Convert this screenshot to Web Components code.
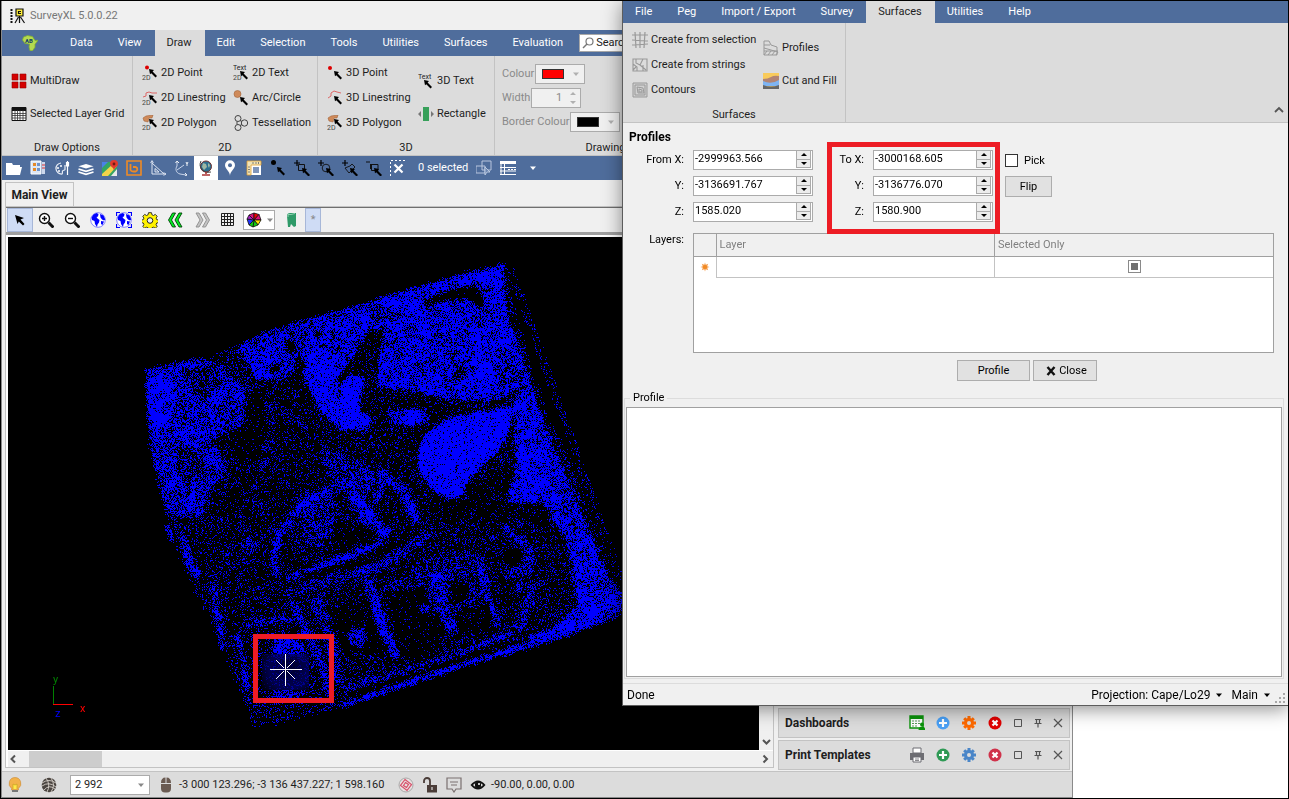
<!DOCTYPE html>
<html lang="en">
<head>
<meta charset="utf-8">
<title>SurveyXL 5.0.0.22</title>
<style>
  html, body { margin: 0; height: 100%; }
  body { font: 11px/14px Roboto, "Liberation Sans", sans-serif; color: #1e1e1e; }
</style>
</head>
<body>
<survey-desktop></survey-desktop>

<script>
/* ---------- icon set ---------- */
const arrow = (x, y) => `<path transform="translate(${x} ${y})" d="M0 0l5 1-1.4 1.5L8 7 6.500 8.500 2.300 4.200 1 5.300z" fill="#000"/>`;
const tag2d = `<text x="0" y="15" font-size="7" fill="#444">2D</text>`;
const cog = c => `<g stroke="${c}" stroke-width="3"><path d="M8 1v14M1 8h14M3.200 3.200l9.600 9.600M12.800 3.200l-9.600 9.600"/></g><circle cx="8" cy="8" r="5" fill="${c}"/><circle cx="8" cy="8" r="2" fill="#dcdcdc"/>`;
const disc = (c, d) => `<circle cx="8" cy="8" r="6.500" fill="${c}"/><path d="${d}" stroke="#fff" stroke-width="2.200"/>`;
const globe = `<circle cx="8" cy="8" r="7.300" fill="#fff" stroke="#66f" stroke-width=".8"/><path d="M1.500 5.500l2-3L6.500 1l2 1-.5 2.500-1.500.5 1 1.500 2 1.500-.5 2.500-1.500 2-.5 2.500L5 12l-.5-3-2.500-1zM10 2l3.500 1.500 1.800 4-1.300 1-2-1-1.500-2zM11 9l3 .5-1.500 3.500-1.500-1z" fill="#00f"/>`;
const axesCrop = extra => `<path d="M0 3h6M3 0v6" stroke="#000" stroke-width="1.200"/>${extra}${arrow(8, 8)}`;
const ICONS = {
  app: `<path d="M1.500 1v14" stroke="#111" stroke-width="2" stroke-dasharray="2 1"/><path d="M6 1h7v7H6z" fill="#ffef3a" stroke="#111" stroke-width="1.200"/><path d="M11 3.500H8.500v2h2.500M9.500 8v7M8.500 9L5 15M10.500 9l4 6" fill="none" stroke="#111" stroke-width="1.200"/>`,
  africa: `<path d="M1.500 2l4-1.500 5 1 2.500 4 3-.2-3 4v3l-2.500 3.500H8L7 12l.5-3L3 8.500.5 5z" fill="#b4da50" stroke="#7fae30" stroke-width=".8"/><text x="3" y="8" font-size="6" font-weight="700" fill="#123a6a">AB</text>`,
  multi: `<path d="M1 1h6v6H1zM9 1h6v6H9zM1 9h6v6H1zM9 9h6v6H9z" fill="#d40000" stroke="#900" stroke-width=".6"/>`,
  grid: `<path d="M1 1.500h14v13H1z" fill="#fff" stroke="#111"/><path d="M1 1h14v4H1z" fill="#111"/><path d="M1 7.500h14M1 9.500h14M1 12h14M4 4v10M6.500 4v10M9 4v10M12 4v10" stroke="#333" stroke-width=".8"/>`,
  point2: `<circle cx="5" cy="2.500" r="2" fill="#d00"/>${tag2d}${arrow(7, 4)}`,
  text2: `<text x="0" y="5" font-size="7" fill="#222">Text</text>${tag2d}${arrow(7, 6)}`,
  line2: `<path d="M1 7l3-1V3l3-1 3 1 5 0" fill="none" stroke="#d66" stroke-width="1"/>${tag2d}${arrow(7, 5)}`,
  poly2: `<path d="M1 3l3-2 7-1-1 3H7L6 7 2 6z" fill="#cf8a5a" stroke="#a3643a" stroke-width=".6"/>${tag2d}${arrow(7, 4)}`,
  arc: `<circle cx="4.500" cy="4" r="3.500" fill="#cf8a5a" stroke="#a3643a" stroke-width=".6"/>${arrow(7, 7)}`,
  tess: `<g fill="none" stroke="#444"><circle cx="5" cy="3.500" r="3"/><circle cx="11.500" cy="8" r="3.200"/><circle cx="5" cy="12.500" r="3"/><path d="M4 6.500v3M7 5.500l2 1M7 10.500l2-1"/></g>`,
  point3: `<circle cx="3" cy="3" r="2" fill="#d00"/>${arrow(7, 6)}`,
  line3: `<path d="M1 8l3-2V3l3-2 3 1 4 1" fill="none" stroke="#d66" stroke-width="1"/>${arrow(7, 6)}`,
  text3: `<text x="0" y="6" font-size="7" fill="#222">Text</text>${arrow(6, 7)}`,
  rect: `<path d="M5 1h6v14H5z" fill="#37a05a"/><path d="M3 5v6L0 8zM13 5v6l3-3z" fill="#777"/>`,
  search: `<circle cx="9.500" cy="6.500" r="3.500" fill="none" stroke="#777" stroke-width="1.200"/><path d="M7 9l-4 4" stroke="#777" stroke-width="1.400"/>`,
  folder: `<path d="M0 3h6l1 2h7v2h2l-2 8H0z" fill="#fff"/>`,
  props: `<path d="M1 1h10v13H1z" fill="#dce6f5" stroke="#fff"/><path d="M3 3h3v3H3zM3 8h3v3H3z" fill="#e58a2a"/><path d="M7 3h3v3H7zM7 8h3v3H7z" fill="#6f94cc"/><path d="M12 2h3v12h-3z" fill="#ccd8ec"/><path d="M12 5h3M12 8h3" stroke="#d33"/>`,
  palette: `<path d="M7 3a5.500 5.500 0 1 0 1 11c1-1 0-2 .5-3s2-.5 2.500-1.500L11 5" fill="none" stroke="#e9eef6" stroke-width="1.200"/><circle cx="4" cy="8" r="1" fill="#fff"/><circle cx="7" cy="6" r="1" fill="#fff"/><circle cx="5" cy="11" r="1" fill="#fff"/><path d="M13.500 1v14M12.500 2v4h2V2" stroke="#fff" stroke-width="1.200" fill="none"/>`,
  layers: `<path d="M8 4l7.500 2.200L8 8.500.5 6.200z" fill="#fff"/><path d="M.5 9L8 11.300 15.500 9M.5 12L8 14.300l7.500-2.300" fill="none" stroke="#fff" stroke-width="1.600"/>`,
  map: `<path d="M0 2h15v14H0z" fill="#35a563"/><path d="M0 14L12 3l3 3-9 10H0z" fill="#f3d34a"/><path d="M9 16l6-7v7z" fill="#e8e8e8"/><path d="M0 2h6L0 8z" fill="#4a80e8"/><path d="M12 11c0-4-4-4-4-7a4 4 0 0 1 8 0c0 3-4 3-4 7z" fill="#e23a2e"/><circle cx="12" cy="4" r="1.400" fill="#701a14"/>`,
  bing: `<path d="M1 1h14v14H1z" fill="none" stroke="#f08a24" stroke-width="1.600"/><path d="M4.500 4v6a3 2 0 0 0 3 1.500h2a2.300 2.300 0 0 0 0-4.500H7" fill="none" stroke="#f08a24" stroke-width="1.800"/>`,
  angle: `<path d="M2 1v13h14M2 3l12 11" fill="none" stroke="#dfe6f2"/><path d="M5 8.500V12h4z" fill="none" stroke="#dfe6f2"/><path d="M.5 3L2 .5 3.500 3M13.500 12.500L16 14l-2.500 1.500" fill="none" stroke="#dfe6f2" stroke-width=".8"/>`,
  axes: `<path d="M3 2v4c-2 3-1 7 3 8l6 1M3 10l7-5" fill="none" stroke="#c9d5ea"/><path d="M1.500 3L3 1l2 2M12 2l1 2 1-2M13 4v2M11 13l2 2-2 1" fill="none" stroke="#fff" stroke-width=".9"/>`,
  globe3: `<circle cx="8" cy="6.500" r="5.500" fill="#2c6f8f" stroke="#703030"/><path d="M5 3l3 1 1 3-3 3-2-3zM10 3l2 2-1 3-1-2z" fill="#9db7a3"/><path d="M3 1a8 8 0 0 0 10 11" fill="none" stroke="#444"/><path d="M8 12v2M4 15h8" stroke="#a33" stroke-width="1.600"/>`,
  pin: `<path d="M8 16C8 11 3 9 3 5.200a5 5 0 0 1 10 0C13 9 8 11 8 16z" fill="#fff"/><circle cx="8" cy="5.300" r="2" fill="#4f6d9c"/>`,
  ruler: `<path d="M5 5h10v10H5z" fill="#fff"/><path d="M7 7h6v6H7z" fill="#7f95bb"/><path d="M1 1h14v4H5v10H1z" fill="#f2e4b8" stroke="#e0a030" stroke-width=".8"/><path d="M2 7h2M2 9.500h2M2 12h2M7 2v2M10 2v2M12.500 2v2" stroke="#555" stroke-width=".7"/>`,
  pick: `<circle cx="3.500" cy="2.500" r="2.500"/>${arrow(7, 7)}`,
  cropR: axesCrop(`<path d="M4.500 4.500h6v6h-6z" fill="none" stroke="#111"/>`),
  cropC: axesCrop(`<circle cx="8" cy="8" r="3.800" fill="none" stroke="#111" stroke-width=".9"/>`),
  cropP: axesCrop(`<path d="M3 8l5-2 2-2 3 3-3 3-3 3z" fill="none" stroke="#111" stroke-width=".9"/>`),
  cropL: `<path d="M0 2h4M4.500 4v5M4 4.500h8v6H5.500v-6" fill="none" stroke="#111"/>${arrow(8, 8)}`,
  clear: `<path d="M.5 16V.5H16" fill="none" stroke="#fff" stroke-dasharray="2 2"/><path d="M4.500 4.500l8 8M12.500 4.500l-8 8" stroke="#fff" stroke-width="2.200"/>`,
  shapes: `<path d="M0 6h9v7H0zM6 1h9v9H6z" fill="none" stroke="#b9c6de"/><path d="M9 7l5 5h-3l-2 3z" fill="#6f88b2" stroke="#c9d5ea" stroke-width=".8"/>`,
  table: `<path d="M0 1h16v3H0z" fill="#fff"/><path d="M1 4v11M4.500 4v11M0 7.500h16M0 11h16M0 14.500h16" stroke="#fff"/><path d="M8 9.500h8" stroke="#fff" stroke-dasharray="2 1"/>`,
  caret: `<path d="M5 6.500h6L8 10z" fill="currentColor"/>`,
  cursor: `<path d="M3 3l9 3-3.500 1.500L12.500 12 11 13.500 6.800 9.500 5.500 12z" fill="#000"/>`,
  zoomIn: `<circle cx="6.500" cy="6.500" r="5" fill="#fff" stroke="#111" stroke-width="1.400"/><path d="M4 6.500h5M6.500 4v5" stroke="#111" stroke-width="1.400"/><path d="M10.500 10.500l5 5" stroke="#111" stroke-width="3"/>`,
  zoomOut: `<circle cx="6.500" cy="6.500" r="5" fill="#fff" stroke="#111" stroke-width="1.400"/><path d="M4 6.500h5" stroke="#111" stroke-width="1.400"/><path d="M10.500 10.500l5 5" stroke="#111" stroke-width="3"/>`,
  globe,
  globeFit: `${globe}<path d="M.5 4V.5H4M12 .5h3.500V4M.5 12v3.500H4M12 15.500h3.500V12" fill="none" stroke="#00f" stroke-width="1.200"/>`,
  gear: `<path d="M6.500.7h3l.4 2 1.600.8 1.800-1.100 1.900 1.900-1.100 1.800.6 1.500 2 .5v2.500l-2 .4-.6 1.600 1.100 1.800-1.900 1.900-1.800-1.100-1.600.6-.4 2h-3l-.4-2-1.600-.6-1.800 1.100-1.900-1.900 1.100-1.800-.6-1.600-2-.4V8.100l2-.5.6-1.500L.8 4.300l1.900-1.900 1.800 1.100 1.600-.8z" fill="#fff200" stroke="#222" stroke-width=".9"/><circle cx="8" cy="8.500" r="2.800" fill="#f0f0f0" stroke="#222"/>`,
  back: `<path d="M7.500 1h-3L.5 8l4 7h3l-4-7zM14 1h-3L7 8l4 7h3l-4-7z" fill="#0e2" stroke="#033c08" stroke-width=".9"/>`,
  fwd: `<path d="M2 1h3l4 7-4 7H2l4-7zM8.500 1h3l4 7-4 7h-3l4-7z" fill="#c4c4c4" stroke="#8c8c8c" stroke-width=".9"/>`,
  mesh: `<path d="M1.500 1.500h12v12h-12zM4.500 2v12M7.500 2v12M10.500 2v12M2 4.500h12M2 7.500h12M2 10.500h12" fill="none" stroke="#222"/>`,
  wheel: `<g stroke="#111" stroke-width=".8"><path d="M8 8L3 3l5-2z" fill="#e0107a"/><path d="M8 8V1l5 1.500z" fill="#e00"/><path d="M8 8l5-5.500L15 8z" fill="#e0107a"/><path d="M8 8l7 0-3 5z" fill="#ffe000"/><path d="M8 8l4 5-5 2z" fill="#1c1"/><path d="M8 8l-1 7-4-2z" fill="#1c1"/><path d="M8 8l-5 5-2-6z" fill="#23f"/><path d="M8 8L1 7l2-4z" fill="#a020c0"/></g>`,
  bookmark: `<path d="M3 4q0-3 3-3h6v13l-2 1-3-3-1 3-2 0z" fill="#2e9a68"/><path d="M4 5V2.500h3l4-1" stroke="#8fd0b0" fill="none"/>`,
  mesh1: `<path d="M3 0l1 16M8 0v16M13 0l-1 16M0 3h16M0 8l16 1M0 13l16-1" fill="none" stroke="#999" stroke-width="1.200"/>`,
  mesh2: `<path d="M1 2h14v12H1zM4 2v4l4 2 3-6M8 8l6 5M1 7l4 3v4M11 8v6M1 13l3-3" fill="none" stroke="#999" stroke-width="1.100"/>`,
  contour: `<path d="M1 1h14v14H1z" fill="#d0d0d0" stroke="#999"/><path d="M3 3h10v10H3zM5 5l6 1 1 5-6 0zM7 7l3 1v2H7z" fill="none" stroke="#999"/>`,
  profile: `<path d="M1 1l5 0 2 4 6 2v8H1z" fill="none" stroke="#999"/><path d="M1 8l14 4M1 11h14M1 15l3-4M5 15l3-4M9 15l3-4M13 15l2-3M1 5h6" stroke="#999"/>`,
  cutfill: `<path d="M0 0h16v16H0z" fill="#f9cb5c"/><path d="M0 6q5 0 8-2t8-1v7H0z" fill="#b28474"/><path d="M0 8q8 4 16-1v6H0z" fill="#7eb4f2"/><path d="M0 12q8 3 16 0v4H0z" fill="#666"/>`,
  up: `<path d="M4 10l4-4 4 4" fill="none" stroke="#555" stroke-width="1.800"/>`,
  down: `<path d="M5 6l3.500 3.500L12 6" fill="none" stroke="#555" stroke-width="2"/>`,
  left: `<path d="M10 4.500L6.500 8l3.500 3.500" fill="none" stroke="#555" stroke-width="2"/>`,
  right: `<path d="M6.500 4.500L10 8l-3.500 3.500" fill="none" stroke="#555" stroke-width="2"/>`,
  star: `<path d="M8 2l1 3 3.200-1.200L11 7l3 1-3 1 1.200 3.200L9 11l-1 3-1-3-3.200 1.200L5 9 2 8l3-1-1.200-3.200L7 5z" fill="#f7a050"/><circle cx="8" cy="8" r="2.800" fill="#f08a24"/>`,
  x: `<path d="M4.500 4l7 8M11.500 4l-7 8" stroke="#111" stroke-width="2.400"/>`,
  dash: `<path d="M1 1h13v12H1z" fill="#fff" stroke="#0b930b" stroke-width="1.400"/><path d="M1 1h13v3H1z" fill="#0b930b"/><path d="M3 6h9M3 8.500h9M3 11h6" stroke="#5a9a5a" stroke-dasharray="2 1"/><circle cx="13" cy="9.500" r="2" fill="#0b930b"/><path d="M9.500 15q0-3.500 3.500-3.500t3 3.500z" fill="#0b930b"/>`,
  addBlue: disc('#4aa0f5', 'M8 4v8M4 8h8'), addGreen: disc('#2f9a55', 'M8 4v8M4 8h8'),
  delRed: disc('#e00000', 'M5.500 5.500l5 5M10.500 5.500l-5 5'), delRose: disc('#d0324a', 'M5.500 5.500l5 5M10.500 5.500l-5 5'),
  cogOrange: cog('#ff6a00'), cogBlue: cog('#4a86c8'),
  box: `<path d="M4.500 4.500h7v7h-7z" fill="none" stroke="#555"/>`,
  tack: `<path d="M5 4.500h6M6.500 4.500v4M9.500 4.500v4M4.500 8.500h7M8 8.500v4" fill="none" stroke="#555" stroke-width="1.200"/>`,
  close: `<path d="M4 4l8 8M12 4l-8 8" stroke="#555" stroke-width="1.200"/>`,
  printer: `<path d="M4 1h8v5H4z" fill="#fff" stroke="#6d6d72"/><path d="M1 6h14v7H1z" fill="#6d6d72"/><path d="M4 10h8v5H4z" fill="#fff" stroke="#6d6d72"/><path d="M6 12h4M6 13.500h4" stroke="#6d6d72" stroke-width=".8"/>`,
  bulb: `<path d="M8 .5a6 6 0 0 0-3.500 10.800V13h7v-1.700A6 6 0 0 0 8 .5z" fill="#f2b24a" stroke="#c98a3a" stroke-width=".6"/><path d="M6 12V7l2 1 2-1v5" fill="#ffe84a" stroke="#c9a020" stroke-width=".7"/><path d="M5 13h6v2H5z" fill="#777"/>`,
  ball: `<circle cx="8" cy="8" r="7.300" fill="#4a4440"/><path d="M1 6q7-5 14 0M1 9q7-5 14 1M3 13q5-6 11-1M5 1q5 7 1 14M10 1q5 7 0 14" fill="none" stroke="#d6d0ca" stroke-width=".9"/>`,
  mouse: `<path d="M3 6q0-5.500 4.500-5.500V6zM8.500 .5Q13 .5 13 6H8.500zM3 7h10v4.500a4 4 0 0 1-4 4H7a4 4 0 0 1-4-4z" fill="#6b5b52"/>`,
  target: `<circle cx="8" cy="8" r="7" fill="#e8e0e0" stroke="#aaa"/><path d="M7 2.500l6.500 5L9 13.500l-6.500-5zM7.500 5.500l3 2-2 3-3-2z" fill="none" stroke="#d8506a" stroke-width="1.200"/>`,
  lock: `<path d="M2 6V4a3 3 0 0 1 6 0v4" fill="none" stroke="#4a3c38" stroke-width="1.800"/><path d="M5 8h10v7.500H5z" fill="#4a3c38"/><path d="M10 10v3" stroke="#dcdcdc" stroke-width="1.200"/>`,
  note: `<path d="M1 1h14v11h-5l-2 3-2-3H1z" fill="none" stroke="#7a7070" stroke-width="1.200"/><path d="M4 5h8M5 8h6" stroke="#7a7070"/>`,
  eye: `<path d="M.5 8Q8-1 15.500 8 8 17 .5 8z" fill="#111"/><path d="M3 8q5-5.500 10 0-5 5.500-10 0z" fill="#fff"/><circle cx="8" cy="8" r="3.200" fill="#111"/><circle cx="9" cy="7" r="1" fill="#fff"/>`,
  grip: `<path d="M13 4h2v2h-2zM9 8h2v2H9zM13 8h2v2h-2zM5 12h2v2H5zM9 12h2v2H9zM13 12h2v2h-2z" fill="#a8a8a8"/>`
};

/* Registers an element whose shadow root is cloned from a template. */
function define(name, css, html, setup) {
  const tpl = document.createElement('template');
  tpl.innerHTML = `<style>*{box-sizing:border-box}button,input,select{font:inherit;color:inherit;margin:0}button{border:0;background:none;padding:0;white-space:nowrap}${css}</style>${html}`;
  customElements.define(name, class extends HTMLElement {
    connectedCallback() {
      if (this.shadowRoot) return;
      const root = this.attachShadow({ mode: 'open' });
      const content = tpl.content.cloneNode(true);
      if (setup) setup(this, content);
      root.append(content);
    }
  });
}

define('ui-icon', `:host{display:inline-flex;flex:none;width:16px;height:16px}svg{display:block;width:100%;height:100%;font-family:Roboto,sans-serif}`,
  `<svg viewBox="0 0 16 16" aria-hidden="true"></svg>`,
  (el, root) => { root.querySelector('svg').innerHTML = ICONS[el.getAttribute('name')]; });

define('menu-tab', `
  :host{display:flex}
  button{padding:0 13px 0 12px;color:#fff}
  :host([active]) button{background:#dcdcdc;color:#1e1e1e}`,
  `<button type="button"><slot></slot></button>`);

define('ribbon-group', `
  :host{display:flex;flex-direction:column;flex:none;border-right:1px solid #c3c3c3;padding-top:4px}
  div{display:flex;height:75px;padding:0 9px}
  p{margin:0;height:20px;line-height:26px;text-align:center}`,
  `<div><slot></slot></div><p></p>`,
  (el, root) => { root.querySelector('p').textContent = el.getAttribute('label'); });

define('ribbon-column', `:host{display:flex;flex-direction:column;justify-content:center;flex:none}`, `<slot></slot>`);

define('ribbon-item', `
  :host{display:flex;height:25px}
  :host([tall]){height:33px}
  button{display:flex;align-items:center;gap:3px}`,
  `<button type="button"><ui-icon></ui-icon><slot></slot></button>`,
  (el, root) => root.querySelector('ui-icon').setAttribute('name', el.getAttribute('icon')));

define('tool-button', `
  :host{display:flex;flex:none;width:24px;height:24px}
  :host([wide]){width:26px}
  :host([narrow]){width:16px;color:#888}
  :host([lit]){background:#fff}
  :host([on]){background:#cfdcf5;outline:1px solid #a7b7d8;outline-offset:-1px}
  button{flex:1;display:flex;align-items:center;justify-content:center}`,
  `<button type="button"><slot></slot></button>`,
  (el, root) => root.querySelector('button').setAttribute('aria-label', el.getAttribute('label') || 'Tool'));

define('swatch-picker', `
  :host{display:flex;height:24px;align-items:center;gap:1px;color:#8a8a8a;white-space:nowrap}
  button{width:50px;height:20px;background:#f0f0f0;border:1px solid #ababab;display:flex;align-items:center;justify-content:space-between;padding-left:6px;color:#b0b0b0}
  i{width:22px;height:10px;border:1px solid #333;background:var(--swatch)}`,
  `<span id="l"><slot></slot></span><button type="button" aria-labelledby="l"><i></i><ui-icon name="caret"></ui-icon></button>`);

define('width-picker', `
  :host{display:flex;height:24px;align-items:center;gap:1px;color:#8a8a8a}
  div{display:flex;width:50px;height:20px;border:1px solid #ababab;background:#f0f0f0;align-items:center}
  input{border:0;background:none;width:30px;padding:0;text-align:right;outline:0}
  svg{width:17px;height:16px}`,
  `<label for="w">Width</label><div><input id="w" value="1"><svg viewBox="0 0 17 16" aria-hidden="true"><path d="M8 5h6l-3-3zM8 11h6l-3 3z" fill="#b0b0b0"/></svg></div>`);

define('spin-field', `
  :host{display:flex;align-items:center;height:20px;gap:9px}
  label{flex:none;width:var(--label,61px);text-align:right}
  div{display:flex;width:120px;height:20px;border:1px solid #ababab;background:#fff}
  input{flex:1;min-width:0;border:0;padding:0 0 2px 1px;background:none;outline:0;color:#000}
  span{display:flex;flex-direction:column;width:15px;margin:0 1px 1px 0}
  button{flex:1;display:flex;align-items:center;justify-content:center;background:#ececec;border:1px solid #ababab;border-top-width:0}
  svg{width:6px;height:3px}`,
  `<label for="v"></label><div><input id="v"><span><button type="button" aria-label="Increase"><svg viewBox="0 0 6 3"><path d="M0 3h6L3 0z"/></svg></button><button type="button" aria-label="Decrease"><svg viewBox="0 0 6 3"><path d="M0 0h6L3 3z"/></svg></button></span></div>`,
  (el, root) => {
    root.querySelector('label').textContent = el.getAttribute('label');
    root.querySelector('input').setAttribute('value', el.getAttribute('value'));
  });

define('dock-panel', `
  :host{display:flex;align-items:center;flex:none;height:30px;border:1px solid #c3c3c3;background:#dcdcdc;padding:0 3px 0 6px}
  b{flex:1;font-size:12px}
  div{display:flex;gap:10px;margin-right:7px}
  nav{display:flex;gap:4px}`,
  `<b></b><div><slot></slot></div><nav><ui-icon name="box"></ui-icon><ui-icon name="tack"></ui-icon><ui-icon name="close"></ui-icon></nav>`,
  (el, root) => { root.querySelector('b').textContent = el.getAttribute('label'); });

/* ---------- point cloud ---------- */
define('point-cloud', `
  :host{display:block;position:relative;overflow:hidden;background:#000}
  canvas{display:block}
  svg{position:absolute;left:0;top:0;font:11px Roboto,sans-serif}`,
  `<canvas width="615" height="513"></canvas>
   <svg width="615" height="513">
     <path d="M45.500 449v19" stroke="#008000"/><path d="M45 467.500h20" stroke="#f00"/>
     <text x="45" y="446" fill="#008000">y</text><text x="72" y="475" fill="#f00">x</text><text x="47" y="480" fill="#00f">z</text>
     <path d="M277.500 417v32M262 432.500h32M268 423l8 8M287 423l-8 8M268 442l8-8M287 442l-8-8" stroke="#fff" fill="none"/>
     <path d="M247.500 399.500h76v64h-76z" fill="none" stroke="#ed1c24" stroke-width="5"/>
   </svg>`,
  (el, root) => drawCloud(root.querySelector('canvas')));

function drawCloud(canvas) {
  const W = canvas.width, H = canvas.height;
  const map = document.createElement('canvas');
  map.width = W; map.height = H;
  const m = map.getContext('2d', { willReadFrequently: true });
  m.fillStyle = '#000'; m.fillRect(0, 0, W, H);
  m.setTransform(1 / 3, 0, 0, 1 / 3, 122, 3);
  const grey = d => { const v = Math.round(d * 255); return `rgb(${v},${v},${v})`; };
  const path = p => { m.beginPath(); for (let i = 0; i < p.length; i += 2) m.lineTo(p[i], p[i + 1]); };
  const area = (d, ...p) => { path(p); m.closePath(); m.fillStyle = grey(d); m.fill(); };
  const ridge = (d, w, ...p) => { path(p); m.lineWidth = w; m.strokeStyle = grey(d > .3 ? Math.min(.76, d * 1.3) : d); m.stroke(); };
  const spot = (d, x, y, r) => { m.beginPath(); m.arc(x, y, r, 0, 7); m.fillStyle = grey(d); m.fill(); };
  m.lineJoin = 'round'; m.filter = 'blur(1.5px)';

  const outline = [45,385,140,368,240,350,310,318,420,270,620,215,850,145,1000,100,1125,65,1135,110,1160,230,1210,400,1250,510,1310,640,1390,840,1440,990,1478,1050,1475,1130,1250,1210,1000,1280,780,1352,620,1405,400,1460,370,1460,340,1380,285,1240,230,1130,180,1020,130,900,105,820,70,660,50,500];
  area(.17, ...outline);
  area(.72, 320,320,420,270,620,215,850,145,1000,100,1080,90,1170,330,1200,430,1100,480,950,480,850,450,740,440,740,340,700,300,650,380,600,540,520,420,520,350,480,410,380,420);
  area(.62, 50,390,200,358,260,370,340,440,345,560,290,570,250,590,290,690,230,760,220,830,110,820,60,620);
  area(.78, 50,420,120,385,140,480,110,560,60,570);
  area(.74, 1060,90,1120,70,1130,230,1190,400,1270,620,1370,860,1430,1000,1475,1060,1470,1125,1240,1200,1345,1090,1310,900,1250,800,1110,790,1160,680,1150,480,1200,430,1100,300);
  area(.9, 525,370,560,330,650,350,630,400,625,470,640,520,720,530,715,565,640,572,580,520,535,440);
  area(.96, 632,420,670,400,712,410,690,470,695,510,732,540,690,572,630,530);
  area(.82, 770,510,890,505,895,545,840,560,785,545);
  area(.96, 890,580,960,530,1060,515,1150,500,1140,570,1100,640,1050,680,1005,730,1000,765,960,780,900,745,868,690,864,630);
  area(.3, 150,390,260,370,280,440,190,470);
  area(.3, 140,620,210,620,230,700,180,740,140,700);
  area(.32, 400,480,500,520,560,600,480,620,420,560);
  area(.42, 580,620,640,640,760,690,700,780,600,760,480,790,560,720);
  area(.42, 500,780,600,760,640,830,570,930,520,900);
  area(.5, 650,770,720,790,770,870,740,900,680,840);
  area(.05, 370,450,400,470,410,600,380,660,320,650,290,600,345,550);
  area(.12, 500,340,525,360,515,420,570,520,560,570,460,500,420,460,490,400);
  area(.12, 715,270,765,265,745,360,720,390,750,450,850,460,950,480,960,520,900,560,900,498,770,500,770,560,740,560,735,530,690,510,715,410,670,400,630,430,610,430,660,370);
  area(.01, 880,180,1000,138,1040,140,1060,170,1060,210,1010,178,940,182,885,200);
  area(.01, 465,300,494,298,496,340,467,340);
  spot(.08, 565,285,12); spot(.15, 430,385,16); spot(.3, 990,400,22);
  ridge(.45, 26, 400,620, 440,640, 390,690);
  area(.08, 620,840,700,850,740,890,640,940,580,950);
  area(.08, 1000,770,1070,690,1150,700,1130,790,1240,790,1270,880,1180,830,1100,820,1010,850,900,850,900,800);
  area(.14, 440,520,560,580,600,740,470,780,330,800,260,780,300,690,410,680);
  ridge(.62, 18, 600,750, 520,790, 450,880, 430,950, 442,1010);
  ridge(.55, 18, 470,1015, 560,985, 740,915, 780,870);
  ridge(.6, 28, 640,720, 700,810, 770,880);
  ridge(.55, 26, 750,700, 820,750, 862,850);
  ridge(.5, 18, 735,790, 770,690);
  ridge(.04, 16, 520,1010, 720,960, 840,890);
  ridge(.36, 30, 470,1060, 600,1020, 740,985, 900,880);
  ridge(.42, 24, 475,1060, 540,1200, 600,1330);
  ridge(.38, 34, 555,1070, 600,1200, 632,1330);
  area(.34, 880,960,1040,930,1070,1060,950,1150,870,1090,760,1040);
  ridge(.58, 30, 715,1020, 760,1170, 800,1250);
  ridge(.55, 34, 915,1000, 940,1100, 970,1180);
  ridge(.5, 24, 1045,950, 1068,1050, 1098,1160);
  ridge(.4, 30, 1120,860, 1200,930, 1190,990, 1130,1000);
  ridge(.32, 30, 1160,1040, 1210,1040, 1170,1170);
  area(.04, 600,1112,715,1080,745,1180,780,1240,640,1240);
  area(.05, 770,1055,880,1040,900,1100,950,1180,900,1270,810,1250);
  area(.05, 965,1030,1015,1020,1005,1080,960,1095);
  area(.06, 980,1110,1075,1090,1095,1170,985,1190);
  spot(.01, 1150, 952, 27); spot(.6, 682,1192,28); spot(.45, 357,918,28); spot(.7, 885,1105,14); spot(.02, 872,1060,18);
  ridge(.4, 16, 330,1165, 410,1142, 490,1138);
  ridge(.55, 16, 322,1180, 340,1260, 352,1350);
  ridge(.55, 16, 248,1035, 262,1120, 280,1230);
  ridge(.55, 20, 160,890, 175,960, 205,1010);
  ridge(.6, 14, 112,858, 128,905);
  ridge(.5, 60, 430,1220, 520,1235);
  ridge(.4, 26, 430,1362, 520,1372);
  ridge(.5, 14, 545,1200, 580,1290, 600,1370);
  ridge(.6, 16, 640,1395, 1000,1272, 1250,1200, 1470,1115);
  ridge(.04, 12, 640,1374, 900,1290, 1150,1205);
  ridge(.42, 16, 640,1350, 900,1268, 1150,1178);
  ridge(.75, 26, 1200,1200, 1470,1110);

  let seed = 20231;
  const rnd = () => (seed = (seed * 1664525 + 1013904223) >>> 0) / 4294967296;
  const field = cell => {
    const cols = Math.ceil(W / cell) + 2, v = Array.from({ length: cols * (Math.ceil(H / cell) + 2) }, rnd);
    return (x, y) => {
      const gx = x / cell, gy = y / cell, i = gx | 0, j = gy | 0, u = gx - i, w = gy - j, k = j * cols + i;
      return (v[k] * (1 - u) + v[k + 1] * u) * (1 - w) + (v[k + cols] * (1 - u) + v[k + cols + 1] * u) * w;
    };
  };
  const coarse = field(13), fine = field(4);
  const dens = m.getImageData(0, 0, W, H).data;
  const ctx = canvas.getContext('2d'), out = ctx.createImageData(W, H);
  for (let y = 0; y < H; y++) for (let x = 0; x < W; x++) {
    const i = (y * W + x) * 4, d = dens[i] / 255;
    const p = d > .85 ? d * .95 : d * (.5 + .5 * coarse(x, y) + .5 * fine(x, y));
    if (d > .005 && rnd() < p) out.data[i + 2] = 255;
    out.data[i + 3] = 255;
  }
  ctx.putImageData(out, 0, 0);
  /* sparse stray returns along the right edge */
  ctx.fillStyle = '#00f';
  for (let n = 0; n < 420; n++) {
    const t = rnd(), s = rnd() * 9;
    ctx.fillRect(Math.round(497 + t * 112 + s), Math.round(30 + t * 315), 1, 1);
  }
  /* smoothed patch around the cursor */
  const g = ctx.createRadialGradient(284, 428, 4, 279, 434, 30);
  g.addColorStop(0, 'rgba(0,0,60,.85)'); g.addColorStop(.6, 'rgba(0,0,110,.7)'); g.addColorStop(1, 'rgba(0,0,10,.8)');
  ctx.fillStyle = g; ctx.fillRect(254, 417, 47, 36);
}

/* ---------- windows ---------- */
const item = (icon, text, tall) => `<ribbon-item icon="${icon}"${tall ? ' tall' : ''}>${text}</ribbon-item>`;
const tools = (names, attr = '') => names.map(n => `<tool-button label="${n}"${attr}><ui-icon name="${n}"></ui-icon></tool-button>`).join('');

define('main-window', `
  :host{display:flex;flex-direction:column;background:#f0f0f0;border:solid #8a8a8a;border-width:0 1px 1px;overflow:hidden}
  header{display:flex;align-items:center;flex:none;height:29px;padding-left:8px;gap:4px;color:#777}
  .menu{display:flex;flex:none;height:26px;background:#4f6d9c}
  .logo{width:56px;display:flex;align-items:center;justify-content:center}
  .find{display:flex;align-items:center;margin:4px 0 4px 3px;width:130px;background:#fff;border:1px solid #a8a8a8}
  .find input{border:0;outline:0;flex:1;min-width:0;padding:0;background:none}
  .find input::placeholder{color:#222;opacity:1}
  .ribbon{display:flex;flex:none;height:100px;background:#dcdcdc;border-bottom:1px solid #c3c3c3}
  .quick{display:flex;flex:none;height:24px;background:#4f6d9c;color:#fff;align-items:center}
  .quick span{width:62px;padding-left:8px}
  .body{flex:1;display:grid;grid-template-columns:1fr 298px;min-height:0}
  .view{display:flex;flex-direction:column;min-width:0;padding:2px 0 3px 3px}
  .tabs{display:flex;height:24px;flex:none}
  .tabs b{width:69px;height:24px;line-height:24px;text-align:center;border:1px solid #c3c3c3;border-bottom:0;font-size:12px}
  .frame{flex:1;display:flex;flex-direction:column;min-height:0;border:1px solid #c3c3c3}
  .bar{display:flex;height:28px;flex:none;align-items:center;border-top:1px solid #6f6f6f;border-bottom:3px solid #9f9f9f;padding-left:1px}
  .combo{width:32px;height:20px;background:#fff;border:1px solid #ababab;display:flex;align-items:center;margin:0 4px 0 2px;color:#888;overflow:hidden;padding-left:2px}
  .stage{flex:1;display:grid;grid-template:minmax(0,1fr) 17px/minmax(0,1fr) 14px;border-left:2px solid #fff;border-top:2px solid #fff}
  .v{display:flex;align-items:end;justify-content:center}
  .h{grid-column:1/-1;display:flex;align-items:center;border-top:1px solid #fff}
  .h i{width:73px;height:16px;background:#cdcdcd}
  .h ui-icon:last-child{margin-left:auto}
  .h ui-icon:first-child{margin:0 8px 0 -3px}
  .dock{display:flex;flex-direction:column;justify-content:flex-end;gap:2px;padding:0 2px 1px 4px}
  footer{display:flex;align-items:center;flex:none;height:26px;background:#dcdcdc;border-top:1px solid #c3c3c3;padding-left:5px}
  .scale{position:relative;display:flex;width:80px;height:20px;margin:0 8px 0 13px;background:#fff;border:1px solid #ababab;color:#888}
  .scale select{appearance:none;border:0;background:none;flex:1;padding:0 0 0 4px;outline:0;color:#1e1e1e}
  .scale ui-icon{position:absolute;right:0;top:1px}
  .gap{margin-right:18px}
  .pos{width:211px;margin:0 8px 0 5px;white-space:nowrap}
  .icons{display:flex;gap:8px;margin-right:5px}`, `
  <header><ui-icon name="app"></ui-icon><span>SurveyXL 5.0.0.22</span></header>
  <div class="menu">
    <button class="logo" type="button" aria-label="Application menu"><ui-icon name="africa"></ui-icon></button>
    <menu-tab>Data</menu-tab><menu-tab>View</menu-tab><menu-tab active>Draw</menu-tab><menu-tab>Edit</menu-tab><menu-tab>Selection</menu-tab><menu-tab>Tools</menu-tab><menu-tab>Utilities</menu-tab><menu-tab>Surfaces</menu-tab><menu-tab>Evaluation</menu-tab>
    <label class="find"><ui-icon name="search"></ui-icon><input placeholder="Search" aria-label="Search"></label>
  </div>
  <div class="ribbon">
    <ribbon-group label="Draw Options" style="width:131px"><ribbon-column>${item('multi', 'MultiDraw', 1)}${item('grid', 'Selected Layer Grid', 1)}</ribbon-column></ribbon-group>
    <ribbon-group label="2D" style="width:185px"><ribbon-column style="width:91px">${item('point2', '2D Point')}${item('line2', '2D Linestring')}${item('poly2', '2D Polygon')}</ribbon-column><ribbon-column>${item('text2', '2D Text')}${item('arc', 'Arc/Circle')}${item('tess', 'Tessellation')}</ribbon-column></ribbon-group>
    <ribbon-group label="3D" style="width:177px"><ribbon-column style="width:91px">${item('point3', '3D Point')}${item('line3', '3D Linestring')}${item('poly2', '3D Polygon')}</ribbon-column><ribbon-column>${item('text3', '3D Text', 1)}${item('rect', 'Rectangle', 1)}</ribbon-column></ribbon-group>
    <ribbon-group label="Drawing" style="width:222px"><ribbon-column style="margin-left:-2px">
      <swatch-picker style="--swatch:#f00">Colour</swatch-picker><width-picker></width-picker><swatch-picker style="--swatch:#000">Border Colour</swatch-picker>
    </ribbon-column></ribbon-group>
  </div>
  <div class="quick">
    ${tools(['folder', 'props', 'palette', 'layers', 'map', 'bing', 'angle', 'axes'])}${tools(['globe3'], ' lit')}${tools(['pin', 'ruler', 'pick', 'cropR', 'cropC', 'cropP', 'cropL', 'clear'])}
    <span>0 selected</span>${tools(['shapes', 'table'])}<tool-button label="More" wide><ui-icon name="caret"></ui-icon></tool-button>
  </div>
  <div class="body">
    <div class="view">
      <div class="tabs"><b>Main View</b></div>
      <div class="frame">
        <div class="bar">${tools(['cursor'], ' wide on')}${tools(['zoomIn', 'zoomOut', 'globe', 'globeFit', 'gear', 'back', 'fwd', 'mesh'], ' wide')}
          <button class="combo" type="button" aria-label="Colour mode"><ui-icon name="wheel"></ui-icon><ui-icon name="caret"></ui-icon></button>
          ${tools(['bookmark'], ' wide')}<tool-button label="All" narrow on>*</tool-button></div>
        <div class="stage"><point-cloud></point-cloud><div class="v"><ui-icon name="down"></ui-icon></div>
          <div class="h"><ui-icon name="left"></ui-icon><i></i><ui-icon name="right"></ui-icon></div></div>
      </div>
    </div>
    <div class="dock">
      <dock-panel label="Dashboards"><ui-icon name="dash"></ui-icon><ui-icon name="addBlue"></ui-icon><ui-icon name="cogOrange"></ui-icon><ui-icon name="delRed"></ui-icon></dock-panel>
      <dock-panel label="Print Templates"><ui-icon name="printer"></ui-icon><ui-icon name="addGreen"></ui-icon><ui-icon name="cogBlue"></ui-icon><ui-icon name="delRose"></ui-icon></dock-panel>
    </div>
  </div>
  <footer>
    <ui-icon name="bulb" class="gap"></ui-icon><ui-icon name="ball"></ui-icon>
    <div class="scale"><select aria-label="Scale"><option>2 992</option></select><ui-icon name="caret"></ui-icon></div>
    <ui-icon name="mouse"></ui-icon><span class="pos">-3 000 123.296; -3 136 437.227; 1 598.160</span>
    <div class="icons"><ui-icon name="target"></ui-icon><ui-icon name="lock"></ui-icon><ui-icon name="note"></ui-icon><ui-icon name="eye"></ui-icon></div>
    <span>-90.00, 0.00, 0.00</span>
  </footer>`);

define('profile-window', `
  :host{display:flex;flex-direction:column;background:#f0f0f0;border:solid #5c5c5c;border-width:0 0 1px 1px;box-shadow:0 3px 18px rgba(0,0,0,.45);color:#000}
  .menu{display:flex;flex:none;height:22px;background:#4f6d9c}
  .menu menu-tab{line-height:18px}
  .ribbon{display:flex;flex:none;height:100px;background:#dcdcdc;border-bottom:1px solid #c3c3c3;color:#1e1e1e}
  .ribbon>ui-icon{margin:auto 1px 4px auto}
  h2{margin:0;padding:7px 0 6px 6px;font-size:12px;line-height:14px}
  .fields{display:flex;flex:none}
  .set{display:flex;flex-direction:column;gap:6px}
  .to{--label:51px;position:relative}
  .to::after{content:"";position:absolute;inset:-8px -7px -12px 14px;border:5px solid #ed1c24;pointer-events:none}
  .side{display:flex;flex-direction:column;align-items:start;gap:9px;padding:4px 0 0 12px}
  .side label{display:flex;align-items:center;gap:6px;height:13px}
  input[type=checkbox]{appearance:none;width:13px;height:13px;border:1px solid #333;background:#fff;display:inline-grid;place-content:center}
  .btn{height:21px;border:1px solid #adadad;background:#e1e1e1;display:flex;align-items:center;justify-content:center}
  .layers{display:flex;margin:11px 14px 0 0;gap:9px;flex:none}
  .layers>span{width:61px;text-align:right}
  .grid{flex:1;height:120px;border:1px solid #a0a0a0;background:#fff}
  table{width:100%;border-collapse:collapse;table-layout:fixed;color:#808080}
  th{font-weight:400;text-align:left;height:22px;background:#f0f0f0;border-bottom:1px solid #a0a0a0;border-right:1px solid #a0a0a0;padding:0 3px}
  td{height:21px;border-right:1px solid #c3c3c3;border-bottom:1px solid #c3c3c3;padding:0;text-align:center}
  tr>:last-child{border-right:0}
  td:first-child{border-bottom:0}
  td ui-icon{width:12px;height:12px;vertical-align:middle}
  td input[type=checkbox]{border-color:#8a8a8a;vertical-align:middle}
  td input::before{content:"";width:7px;height:7px;background:#707070}
  .actions{display:flex;gap:3px;padding:7px 0 0 334px;flex:none}
  fieldset{flex:1;display:flex;min-height:0;margin:10px 4px 4px 1px;border:1px solid #dcdcdc;padding:2px 1px 1px 1px}
  legend{margin-left:4px;padding:0 3px;line-height:14px}
  .plot{flex:1;background:#fff;border:1px solid #a0a0a0}
  footer{display:flex;align-items:center;flex:none;height:22px;border-top:1px solid #dcdcdc;padding:0 2px 0 4px;font-size:12px}
  footer span{flex:1}
  footer button{display:flex;align-items:center;margin-left:4px}
  footer button ui-icon{margin-left:1px}
  footer>ui-icon{align-self:end;margin-left:-5px}`, `
  <div class="menu"><menu-tab>File</menu-tab><menu-tab>Peg</menu-tab><menu-tab>Import / Export</menu-tab><menu-tab>Survey</menu-tab><menu-tab active>Surfaces</menu-tab><menu-tab>Utilities</menu-tab><menu-tab>Help</menu-tab></div>
  <div class="ribbon">
    <ribbon-group label="Surfaces" style="width:223px"><ribbon-column style="width:131px">${item('mesh1', 'Create from selection')}${item('mesh2', 'Create from strings')}${item('contour', 'Contours')}</ribbon-column><ribbon-column>${item('profile', 'Profiles', 1)}${item('cutfill', 'Cut and Fill', 1)}</ribbon-column></ribbon-group>
    <ui-icon name="up"></ui-icon>
  </div>
  <h2>Profiles</h2>
  <div class="fields">
    <div class="set"><spin-field label="From X:" value="-2999963.566"></spin-field><spin-field label="Y:" value="-3136691.767"></spin-field><spin-field label="Z:" value="1585.020"></spin-field></div>
    <div class="set to"><spin-field label="To X:" value="-3000168.605"></spin-field><spin-field label="Y:" value="-3136776.070"></spin-field><spin-field label="Z:" value="1580.900"></spin-field></div>
    <div class="side"><label><input type="checkbox">Pick</label><button class="btn" type="button" style="width:47px">Flip</button></div>
  </div>
  <div class="layers"><span>Layers:</span>
    <div class="grid"><table><colgroup><col style="width:22px"><col><col></colgroup>
      <thead><tr><th></th><th>Layer</th><th>Selected Only</th></tr></thead>
      <tbody><tr><td><ui-icon name="star"></ui-icon></td><td></td><td><input type="checkbox" aria-label="Selected Only"></td></tr></tbody></table></div>
  </div>
  <div class="actions"><button class="btn" type="button" style="width:73px">Profile</button><button class="btn" type="button" style="width:64px"><ui-icon name="x"></ui-icon>Close</button></div>
  <fieldset><legend>Profile</legend><div class="plot"></div></fieldset>
  <footer><span>Done</span><button type="button">Projection: Cape/Lo29<ui-icon name="caret"></ui-icon></button><button type="button">Main<ui-icon name="caret"></ui-icon></button><ui-icon name="grip"></ui-icon></footer>`);

define('survey-desktop', `
  :host{display:flex;position:relative;box-sizing:border-box;height:100vh;min-height:500px;border:1px solid #000;background:#fff;overflow:hidden}
  main-window{flex:1;min-width:0;margin-right:215px;box-sizing:border-box}
  profile-window{position:absolute;top:0;right:0;bottom:92px;left:621px;box-sizing:border-box}`,
  `<main-window></main-window><profile-window></profile-window>`);
</script>
</body>
</html>
